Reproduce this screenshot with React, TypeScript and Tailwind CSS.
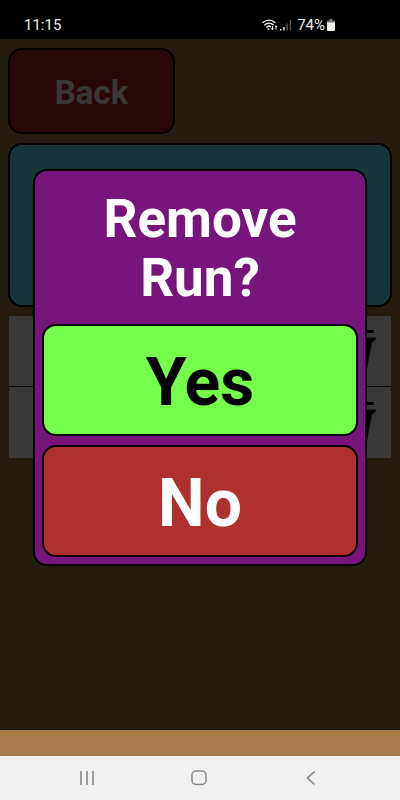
import React from 'react';

function StatusBar() {
  return (
    <header className="flex h-[39px] shrink-0 items-center justify-between bg-black pt-[10px] pr-[65px] pl-6 text-[15px] leading-4 text-[#eeeeee]">
      <span>11:15</span>
      <div className="flex items-center gap-[2px]">
        <svg width="16" height="12" viewBox="0 0 16 12" fill="none" stroke="currentColor" strokeWidth="1.4" strokeLinecap="round" aria-hidden="true">
          <path d="M1 3.4C4.4 .3 9.6 .3 13 3.4M2.8 5.8C5.2 3.7 8.8 3.7 11.2 5.8M4.8 8C6.2 6.9 7.7 6.9 8.6 7.8" />
          <path d="M6 10h.8" />
          <path d="M10.5 7.5v3M9.4 9.6l1.1 1.1 1.1-1.1M14 10V7M13 7.9l1-1 1 1" strokeWidth="1" />
        </svg>
        <svg width="12" height="12" viewBox="0 0 12 12" aria-hidden="true">
          <path d="M0 10h1.4v1.5H0zM3.2 8h1.4v3.5H3.2z" fill="#eeeeee" />
          <path d="M6.6 4.5H8v7H6.6zM9.8 1h1.4v10.5H9.8z" fill="#555555" />
        </svg>
        <span className="pl-[3px]">74%</span>
        <svg width="8" height="12" viewBox="0 0 8 12" aria-hidden="true">
          <path d="M2.5 0h3v1.5H8V4H0V1.5h2.5z" fill="#777777" />
          <path d="M0 3.5h8V11a1 1 0 0 1-1 1H1a1 1 0 0 1-1-1z" fill="#eeeeee" />
        </svg>
      </div>
    </header>
  );
}

function TrashIcon() {
  return (
    <svg width="46" height="54" viewBox="0 0 46 54" aria-hidden="true">
      <path d="M4 6H42Q44 7.5 42 9H4Q2 7.5 4 6z" />
      <path d="M1 13.5H45L44 16.5 41 18 35.5 47H10.5L5 18 2 16.5z" />
    </svg>
  );
}

function RunRow() {
  return (
    <li className="flex h-[71px] items-center justify-end pr-[14px]">
      <button type="button" aria-label="Remove">
        <TrashIcon />
      </button>
    </li>
  );
}

function RemoveDialog() {
  return (
    <div className="absolute inset-0 flex justify-center bg-black/78 px-[33px] pt-[130px]">
      <div role="dialog" aria-modal="true" aria-labelledby="remove-title" className="flex h-fit w-full flex-col gap-[9px] rounded-[14px] border-2 border-black bg-[#78157d] p-[7px]">
        <h1 id="remove-title" className="px-12 pt-3 pb-[7px] text-center text-[53px] leading-[59px] font-bold text-white">
          Remove Run?
        </h1>
        <button type="button" className="h-[112px] rounded-[14px] border-2 border-black bg-[#76ff4a] pt-[6px] text-[66px] leading-[76px] font-bold text-black">
          Yes
        </button>
        <button type="button" className="h-[112px] rounded-[14px] border-2 border-black bg-[#ae312f] pt-[6px] text-[66px] leading-[76px] font-bold text-white">
          No
        </button>
      </div>
    </div>
  );
}

export default function App() {
  return (
    <div className="flex min-h-screen flex-col bg-[#a87d4e] font-[Roboto,sans-serif]">
      <StatusBar />
      <main className="relative flex flex-1 flex-col gap-[9px] px-2 pt-[9px]">
        <button type="button" className="h-[86px] w-[167px] rounded-[14px] border-2 border-black bg-[#ae2528] pt-1 text-[33px] font-bold text-white">
          Back
        </button>
        <section className="h-[164px] rounded-[14px] border-2 border-black bg-[#64f1ff]" />
        <ul className="mx-px divide-y divide-black bg-white">
          <RunRow />
          <RunRow />
        </ul>
        <RemoveDialog />
      </main>
      <div className="h-[26px] shrink-0" />
      <nav className="flex h-11 shrink-0 items-center justify-between bg-[#f1f1f1] pr-[81px] pl-[79px] text-[#888888]">
        <button type="button" aria-label="Recent apps">
          <svg width="16" height="16" viewBox="0 0 16 16" fill="none" stroke="currentColor" strokeWidth="1.6" aria-hidden="true">
            <path d="M2 1v14M8 1v14M14 1v14" />
          </svg>
        </button>
        <button type="button" aria-label="Home">
          <svg width="16" height="16" viewBox="0 0 16 16" fill="none" stroke="currentColor" strokeWidth="1.5" aria-hidden="true">
            <rect x="1" y="1" width="14" height="13.5" rx="4" />
          </svg>
        </button>
        <button type="button" aria-label="Go back">
          <svg width="16" height="16" viewBox="0 0 16 16" fill="none" stroke="currentColor" strokeWidth="1.6" aria-hidden="true">
            <path d="M11.5 1.5L4.5 8l7 6.5" />
          </svg>
        </button>
      </nav>
    </div>
  );
}
